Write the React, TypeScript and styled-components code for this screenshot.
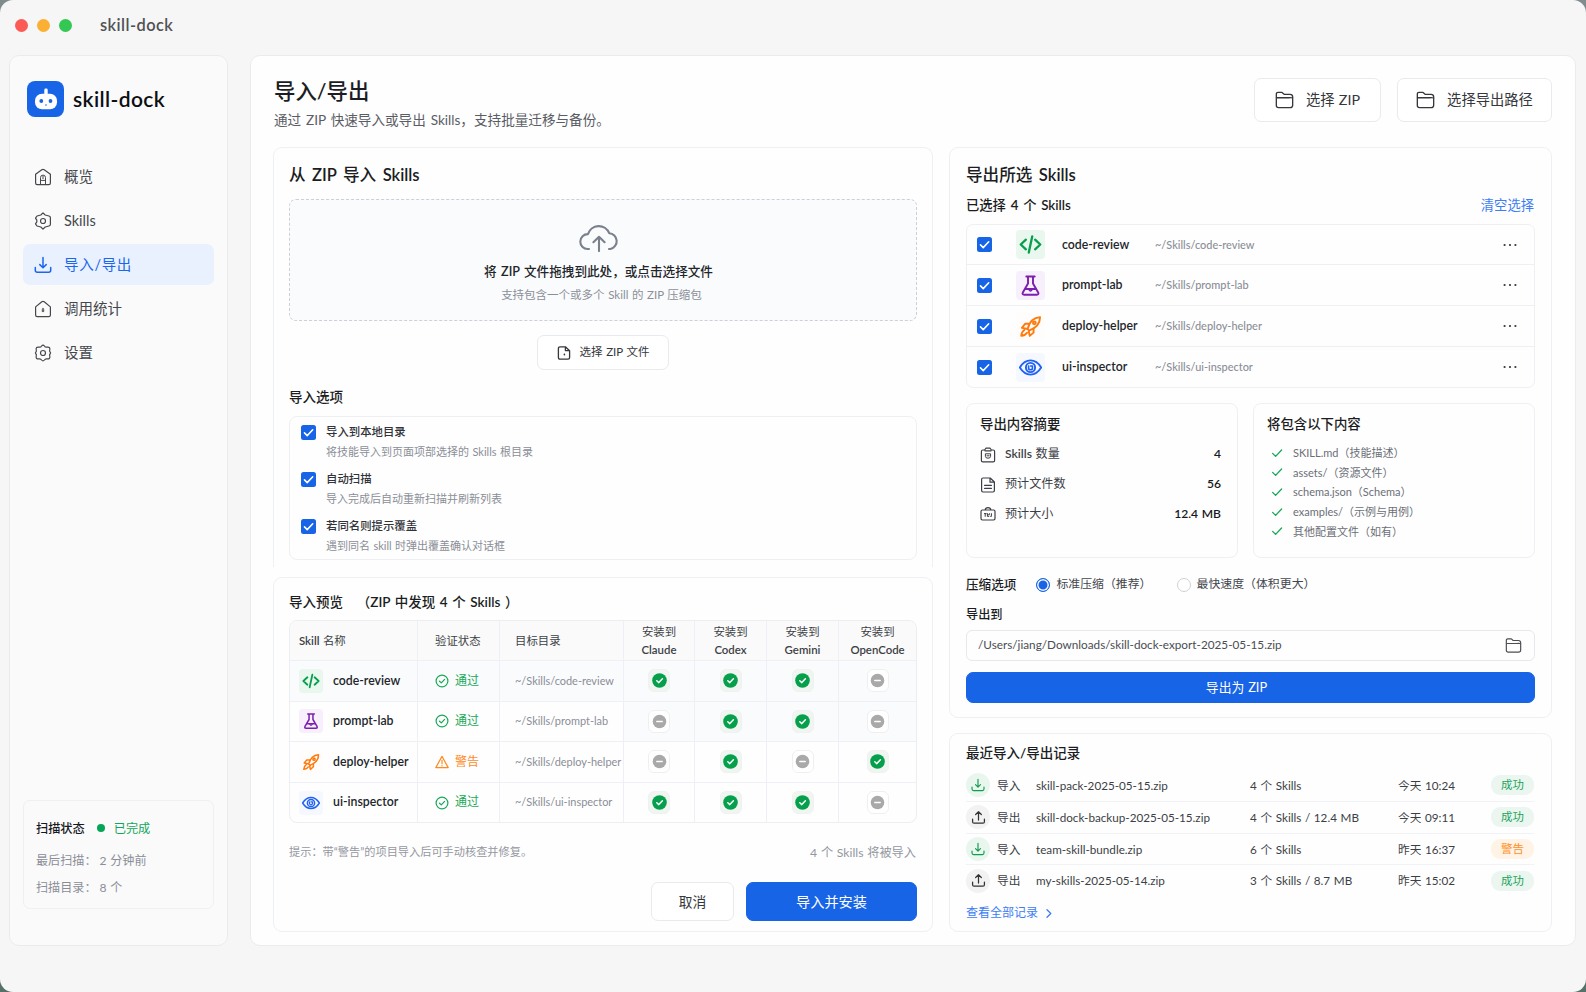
import React from 'react';
import styled, { createGlobalStyle } from 'styled-components';

const color = {
  blue: '#1864e6',
  link: '#3d7df2',
  green: '#06a04c',
  orange: '#ff8a1f',
  purple: '#7a1fb0',
  ink: '#1b1d22',
  text: '#3c3f45',
  sub: '#8b8e97',
  line: '#eef0f3',
};

const semibold = "'Lato Semibold', Lato, 'Noto Sans CJK SC', sans-serif";

const GlobalStyle = createGlobalStyle`
  * {
    box-sizing: border-box;
  }

  body {
    margin: 0;
    background: linear-gradient(#7f8b8d, #56706a);
    font-family: Lato, 'Noto Sans CJK SC', sans-serif;
    line-height: 1.4;
    word-spacing: 0.04em;
    color: ${color.ink};
  }

  h1, h2, h3, p, ul {
    margin: 0;
    padding: 0;
    font-weight: 500;
  }

  button {
    font-family: inherit;
    line-height: inherit;
    word-spacing: inherit;
  }

  svg {
    display: block;
    flex: none;
  }
`;

type SkillKey = 'code' | 'flask' | 'rocket' | 'eye';

type Skill = {
  name: string;
  icon: SkillKey;
  pass: boolean;
  targets: boolean[];
};

const skills: Skill[] = [
  { name: 'code-review', icon: 'code', pass: true, targets: [true, true, true, false] },
  { name: 'prompt-lab', icon: 'flask', pass: true, targets: [false, true, true, false] },
  { name: 'deploy-helper', icon: 'rocket', pass: false, targets: [false, true, false, true] },
  { name: 'ui-inspector', icon: 'eye', pass: true, targets: [true, true, true, false] },
];

const importOptions = [
  { title: '导入到本地目录', desc: '将技能导入到页面项部选择的 Skills 根目录' },
  { title: '自动扫描', desc: '导入完成后自动重新扫描并刷新列表' },
  { title: '若同名则提示覆盖', desc: '遇到同名 skill 时弹出覆盖确认对话框' },
];

const contents = [
  'SKILL.md（技能描述）',
  'assets/（资源文件）',
  'schema.json（Schema）',
  'examples/（示例与用例）',
  '其他配置文件（如有）',
];

const records = [
  { isImport: true, file: 'skill-pack-2025-05-15.zip', count: '4 个 Skills', date: '今天 10:24', ok: true },
  { isImport: false, file: 'skill-dock-backup-2025-05-15.zip', count: '4 个 Skills / 12.4 MB', date: '今天 09:11', ok: true },
  { isImport: true, file: 'team-skill-bundle.zip', count: '6 个 Skills', date: '昨天 16:37', ok: false },
  { isImport: false, file: 'my-skills-2025-05-14.zip', count: '3 个 Skills / 8.7 MB', date: '昨天 15:02', ok: true },
];

/* ---------- icons ---------- */

type IconProps = {
  w?: number;
  h?: number;
  box?: string;
  sw?: number;
  children: React.ReactNode;
};

const Icon: React.FC<IconProps> = ({ w = 18, h, box = '0 0 24 24', sw = 1.6, children }) => (
  <svg
    width={w}
    height={h ?? w}
    viewBox={box}
    fill="none"
    stroke="currentColor"
    strokeWidth={sw}
    strokeLinecap="round"
    strokeLinejoin="round"
  >
    {children}
  </svg>
);

const HomeIcon = () => (
  <Icon w={18} box="0 0 18 18" sw={1.2}>
    <path d="M1.6 6.2 7.8 1.8Q9 1 10.2 1.8L16.4 6.2V15Q16.4 16.6 14.8 16.6H3.2Q1.6 16.6 1.6 15Z" />
    <path d="M6.5 16.4V9.6A2.5 2.5 0 0 1 11.5 9.6V16.4M6.5 12.4H11.5M9 8.2V10.6" strokeWidth={1} />
  </Icon>
);

const StatsIcon = () => (
  <Icon w={18} box="0 0 18 18" sw={1.2}>
    <path d="M1.6 6.9 7.8 1.8Q9 .9 10.2 1.8L16.4 6.9V15Q16.4 16.6 14.8 16.6H3.2Q1.6 16.6 1.6 15Z" />
    <path d="M9 8.6Q9.9 9.3 9.7 10V11.6H8.3V10Q8.1 9.3 9 8.6Z" strokeWidth={1} />
  </Icon>
);

const GearIcon: React.FC<{ soft?: boolean }> = ({ soft }) => (
  <Icon w={18} box="0 0 18 18" sw={1.2}>
    {soft ? (
      <path d="M7.6 2Q9 .2 10.4 2Q11.2 3.4 12.8 3.2Q16.4 2.6 15.8 5.8Q15.2 7.4 16.2 8.2Q17 9 16.2 9.8Q15.2 10.6 15.8 12.2Q16.4 15.4 12.8 14.8Q11.2 14.6 10.4 16Q9 17.8 7.6 16Q6.8 14.6 5.2 14.8Q1.6 15.4 2.2 12.2Q2.8 10.6 1.8 9.8Q1 9 1.8 8.2Q2.8 7.4 2.2 5.8Q1.6 2.6 5.2 3.2Q6.8 3.4 7.6 2Z" />
    ) : (
      <path d="M9 .9 11.2 3 15 4Q16.4 4.4 16.4 5.8V12.2Q16.4 13.6 15 14L11.2 15 9 17.1 6.8 15 3 14 1.5 11.8 2.8 9.8V8.2L1.5 6.2 3 4 6.8 3Z" />
    )}
    <circle cx="9" cy="9" r="2.5" />
  </Icon>
);

const ImportIcon: React.FC<{ size?: number; sw?: number }> = ({ size = 18, sw = 1.5 }) => (
  <Icon w={size} box="0 0 18 18" sw={sw}>
    <path d="M9 1.6V11.6M5.8 8.6 9 11.8 12.2 8.6M1.3 11.6V14.2Q1.3 16.2 3.3 16.2H14.7Q16.7 16.2 16.7 14.2V11.6" />
  </Icon>
);

const ExportIcon: React.FC<{ size?: number }> = ({ size = 18 }) => (
  <Icon w={size} box="0 0 18 18" sw={1.5}>
    <path d="M9 12V2.2M5.6 5.4 9 2 12.4 5.4M1.9 10.8V14Q1.9 15.8 3.7 15.8H14.3Q16.1 15.8 16.1 14V10.8" />
  </Icon>
);

const FolderIcon: React.FC<{ w?: number; h?: number }> = ({ w = 19, h = 18 }) => (
  <Icon w={w} h={h} box="0 0 20 18" sw={1.4}>
    <path d="M1.4 14.8V2.8Q1.4 1 3.2 1H7.4L9.6 3H15.8Q18.6 3 18.6 5.8V14.4Q18.6 17 16 17H3.6Q1.4 17 1.4 14.8Z" />
    <path d="M1.6 6.6H14Q18 6.4 18.4 6.8" />
  </Icon>
);

const FileIcon = () => (
  <Icon w={14} box="0 0 14 14" sw={1.3}>
    <path d="M1.4 2.4Q1.4.8 3 .8H8.4L12.6 4.8V11.6Q12.6 13.2 11 13.2H3Q1.4 13.2 1.4 11.6ZM8.4.8V4.6H12.4" />
    <path d="M7.4 8.3V8.8" strokeWidth={1.6} />
  </Icon>
);

const CloudIcon = () => (
  <Icon w={40} h={31} box="0 0 40 31" sw={2.1}>
    <path d="M10 28H8.6A7.4 7.4 0 0 1 8.9 13.1A11.3 11.3 0 0 1 30.2 12.2A8 8 0 0 1 31.4 28H30" />
    <path d="M20 30V16M14.4 21.2 20 15.8 25.6 21.2" />
  </Icon>
);

const CheckMark: React.FC<{ w?: number; sw?: number }> = ({ w = 11, sw = 1.7 }) => (
  <Icon w={w} box="0 0 12 12" sw={sw}>
    <path d="M1.6 6.4 4.6 9.4 10.6 3" />
  </Icon>
);

const RobotIcon = () => (
  <svg width="24" height="24" viewBox="0 0 24 24" fill="#fff">
    <rect x="10.3" y="1.6" width="3.4" height="8" rx="1.4" />
    <rect x="1" y="6.8" width="22" height="15.4" rx="7" />
    <circle cx="7.3" cy="14" r="1.9" fill={color.blue} />
    <circle cx="16.5" cy="14" r="1.9" fill={color.blue} />
    <circle cx="12" cy="18" r=".8" fill={color.blue} />
  </svg>
);

const skillTint: Record<SkillKey, { fg: string; bg: string }> = {
  code: { fg: color.green, bg: '#e9f7ee' },
  flask: { fg: color.purple, bg: '#f7effc' },
  rocket: { fg: '#ff7a0c', bg: '#fffdfb' },
  eye: { fg: '#1f62f2', bg: '#f5f8ff' },
};

const skillShape: Record<SkillKey, React.ReactNode> = {
  code: <path d="M7.2 7 1.8 12 7.2 17M16.8 7 22.2 12 16.8 17M13.8 3.6 10.2 20.4" strokeWidth={2.4} />,
  flask: (
    <>
      <path d="M7.6 2.6H16.4M9.4 2.8V10L4 19.2Q3 21.6 5.4 21.6H18.6Q21 21.6 20 19.2L14.6 10V2.8M7.4 15.6H16.6" />
      <path d="M10.4 16.4Q12 19 13.6 16.4" strokeWidth={1.6} />
    </>
  ),
  rocket: (
    <>
      <path d="M9 14.6C10.6 8 14.6 2.6 22 2.2C22 9 17.4 13.8 10.6 16.4Z" />
      <path d="M10.2 9.2H6.4L3 13.4 8 14.4M15.2 14.4V18.4L11.2 21.8 10.2 17M5.6 15.6Q2.6 17.6 2.4 21.8Q6.6 21.4 8.4 18.6" />
      <circle cx="16" cy="8.2" r="1.5" />
    </>
  ),
  eye: (
    <>
      <path d="M.8 12Q5.4 4.6 12 4.6T23.2 12Q18.6 19.4 12 19.4T.8 12Z" />
      <circle cx="12" cy="12" r="4.8" />
      <path d="M10 10.4V12.4A2 2 0 0 0 14 12.4V10.4H12" strokeWidth={1.7} />
    </>
  ),
};

const SkillIcon: React.FC<{ kind: SkillKey; size: number }> = ({ kind, size }) => (
  <Icon w={size} sw={2}>
    {skillShape[kind]}
  </Icon>
);

const DotMark: React.FC<{ on: boolean }> = ({ on }) => (
  <svg width="15" height="15" viewBox="0 0 15 15" fill="none" stroke="#fff" strokeWidth="1.5" strokeLinecap="round">
    <circle cx="7.5" cy="7.5" r={on ? 7.3 : 6.8} fill={on ? color.green : '#a9a9a9'} stroke="none" />
    <path d={on ? 'M4.8 7.8 6.8 9.6 10.4 5.8' : 'M4.8 7.5H10.2'} strokeLinejoin="round" />
  </svg>
);

const PassIcon = () => (
  <Icon w={14} box="0 0 14 14" sw={1.2}>
    <circle cx="7" cy="7" r="5.9" />
    <path d="M4.5 7.2 6.3 8.9 9.6 5.4" />
  </Icon>
);

const WarnIcon = () => (
  <Icon w={14} box="0 0 14 14" sw={1.2}>
    <path d="M7 1.4 13.2 12.6H.8ZM7 5.4V8.8M7 10.6V10.8" />
  </Icon>
);

const BagIcon = () => (
  <Icon w={16} box="0 0 16 16" sw={1.2}>
    <path d="M1.4 4.4Q1.4 3 2.8 3H4.6L6 1.2H10L11.4 3H13.2Q14.6 3 14.6 4.4V13.4Q14.6 14.8 13.2 14.8H2.8Q1.4 14.8 1.4 13.4ZM5 3.8H11" />
    <path d="M5.4 7.2V9.4Q5.4 11.2 8 11.2T10.6 9.4V7.2ZM7 8.8H9.2" strokeWidth={1} />
  </Icon>
);

const DocIcon = () => (
  <Icon w={16} box="0 0 16 16" sw={1.2}>
    <path d="M1.6 2.4Q1.6 1 3 1H10.2L14.4 5V13.6Q14.4 15 13 15H3Q1.6 15 1.6 13.6ZM10 1.2V5.2H14M4.6 8.4H11.4M4.6 11.4H11.4" />
  </Icon>
);

const CaseIcon = () => (
  <Icon w={16} box="0 0 16 16" sw={1.2}>
    <path d="M1 5.4Q1 4 2.4 4H13.6Q15 4 15 5.4V12.6Q15 14 13.6 14H2.4Q1 14 1 12.6ZM5.2 3.8Q5.4 1.6 8 1.6T10.8 3.8" />
    <path d="M4.4 7.6H6.2M5.2 7.6V10.4M7.4 7.6V10.4H8.8M8 8.8H9.4V7.6M11.4 7.6V10.4H10.6" strokeWidth={1} />
  </Icon>
);

/* ---------- frame ---------- */

const Window = styled.div`
  width: 1586px;
  height: 992px;
  overflow: hidden;
  border-radius: 13px;
  background: #f6f6f6;
`;

const TitleBar = styled.header`
  display: flex;
  align-items: center;
  height: 55px;
  padding: 0 0 4px 15px;
`;

const Lights = styled.div`
  display: flex;
  gap: 9px;
  margin-right: 28px;
`;

const Light = styled.i<{ bg: string }>`
  width: 13px;
  height: 13px;
  border-radius: 50%;
  background: ${(props) => props.bg};
`;

const WindowTitle = styled.span`
  padding-bottom: 1px;
  color: #505154;
  font-family: ${semibold};
  font-size: 16.4px;
  font-weight: 600;
  letter-spacing: 0.45px;
  line-height: 20px;
`;

const Body = styled.div`
  display: flex;
  gap: 22px;
  height: 891px;
  padding: 0 10px 0 9px;
`;

const Sidebar = styled.aside`
  display: flex;
  flex: none;
  flex-direction: column;
  width: 219px;
  padding: 25px 13px 36px;
  border: 1px solid #e9ebee;
  border-radius: 10px;
  background: #fafafb;
`;

const Brand = styled.div`
  display: flex;
  align-items: center;
  gap: 9px;
  height: 36px;
  padding-left: 4px;
  color: #0d0f13;
  font-family: ${semibold};
  font-size: 21px;
  font-weight: 600;
  letter-spacing: 0.4px;
`;

const Logo = styled.span`
  display: flex;
  align-items: center;
  justify-content: center;
  width: 37px;
  height: 36px;
  border-radius: 8px;
  background: ${color.blue};
`;

const Nav = styled.nav`
  display: flex;
  flex-direction: column;
  gap: 3px;
  margin-top: 39px;
`;

const NavItem = styled.a<{ active?: boolean }>`
  display: flex;
  align-items: center;
  gap: 12px;
  height: 41px;
  padding: 1px 0 0 11px;
  border-radius: 7px;
  background: ${(props) => (props.active ? '#e9f1fe' : 'transparent')};
  color: ${(props) => (props.active ? '#1a66ee' : '#45474c')};
  font-size: 14.5px;
  letter-spacing: ${(props) => (props.active ? '0.7px' : 'normal')};
`;

const StatusCard = styled.section`
  margin-top: auto;
  height: 109px;
  padding: 15px 12px 0;
  border: 1px solid ${color.line};
  border-radius: 7px;
`;

const StatusHead = styled.div`
  display: flex;
  align-items: center;
  height: 25px;
  color: #17191d;
  font-size: 12.2px;
  font-weight: 500;
`;

const StatusDone = styled.span`
  display: flex;
  align-items: center;
  gap: 9px;
  margin-left: 12px;
  color: #12a75a;
  font-weight: 400;

  &::before {
    content: '';
    width: 8px;
    height: 8px;
    border-radius: 50%;
    background: #06a457;
  }
`;

const StatusLine = styled.p<{ gap?: number }>`
  display: flex;
  gap: 3px;
  margin-top: ${(props) => props.gap ?? 0}px;
  color: ${color.sub};
  font-size: 12.1px;
  font-weight: 400;
  line-height: 27px;
`;

const Main = styled.main`
  flex: 1;
  padding: 22px 23px 0 22px;
  border: 1px solid #e9ebee;
  border-radius: 10px;
  background: #fefefe;
`;

const PageHead = styled.div`
  display: flex;
  justify-content: space-between;
  height: 69px;
`;

const PageTitle = styled.h1`
  margin: 0 0 0 1px;
  font-size: 21.4px;
  line-height: 26px;
`;

const PageDesc = styled.p`
  margin: 4px 0 0 1px;
  color: #5a5d64;
  font-size: 13.6px;
  font-weight: 400;
  line-height: 24px;
  word-spacing: 0.1em;
`;

const HeadActions = styled.div`
  display: flex;
  gap: 16px;
`;

const Button = styled.button<{ w: number; h: number; size: number; primary?: boolean; gap?: number; shift?: number }>`
  display: flex;
  align-items: center;
  justify-content: center;
  gap: ${(props) => props.gap ?? 0}px;
  width: ${(props) => props.w}px;
  height: ${(props) => props.h}px;
  padding: 0 ${(props) => props.shift ?? 0}px 0 0;
  border: 1px solid ${(props) => (props.primary ? color.blue : '#e8eaee')};
  border-radius: 7px;
  background: ${(props) => (props.primary ? color.blue : '#fff')};
  color: ${(props) => (props.primary ? '#fff' : '#35373c')};
  font-size: ${(props) => props.size}px;
`;

const Columns = styled.div`
  display: flex;
  gap: 16px;
`;

const Column = styled.div<{ w: number }>`
  display: flex;
  flex: none;
  flex-direction: column;
  width: ${(props) => props.w}px;
`;

const Card = styled.section<{ h: number; mt?: number; px?: number; open?: boolean }>`
  height: ${(props) => props.h}px;
  margin-top: ${(props) => props.mt ?? 0}px;
  padding: 0 ${(props) => props.px ?? 15}px;
  border: 1px solid ${color.line};
  border-radius: 9px;
  ${(props) => props.open && 'border-bottom: 0; border-radius: 9px 9px 0 0;'}
`;

const CardTitle = styled.h2<{ size: number; h: number; mt: number }>`
  margin-top: ${(props) => props.mt}px;
  font-family: ${semibold};
  font-size: ${(props) => props.size}px;
  line-height: ${(props) => props.h}px;
  white-space: pre;
  word-spacing: 0.09em;
`;

const MainTitle = styled(CardTitle)`
  padding-top: 1px;
  margin-bottom: -1px;
  word-spacing: 0.14em;
`;

/* ---------- import ---------- */

const DropZone = styled.div`
  display: flex;
  flex-direction: column;
  align-items: center;
  height: 122px;
  margin-top: 12px;
  padding: 21px 9px 0 0;
  border: 1px dashed #cdd0d6;
  border-radius: 7px;
  background: #fafbfd;
  color: #7a808c;
`;

const DropTitle = styled.p`
  margin-top: 8px;
  color: #22252a;
  font-family: ${semibold};
  font-size: 12.6px;
  line-height: 24px;
  word-spacing: 0.1em;
`;

const DropHint = styled.p`
  margin-left: 6px;
  color: #8b8f98;
  font-size: 11.5px;
  font-weight: 400;
  line-height: 22px;
`;

const PickRow = styled.div`
  display: flex;
  justify-content: center;
  margin-top: 14px;
`;

const OptionBox = styled.div`
  height: 144px;
  margin-top: 7px;
  padding: 5px 11px;
  border: 1px solid ${color.line};
  border-radius: 8px;
`;

const Option = styled.label`
  display: flex;
  gap: 10px;
  height: 46.8px;
`;

const Checkbox = styled.span`
  display: flex;
  align-items: center;
  justify-content: center;
  flex: none;
  width: 15px;
  height: 15px;
  border-radius: 2.5px;
  background: ${color.blue};
  color: #fff;
`;

const OptionCheck = styled(Checkbox)`
  margin-top: 3px;
`;

const OptionText = styled.span`
  color: #303338;
  font-size: 11.4px;
  font-weight: 500;
  line-height: 20px;
`;

const OptionDesc = styled.small`
  display: block;
  color: ${color.sub};
  font-size: 11px;
  font-weight: 400;
`;

const Table = styled.div`
  margin-top: 6px;
  overflow: hidden;
  border: 1px solid #eceef2;
  border-radius: 8px;
`;

const TableRow = styled.div<{ head?: boolean; tint?: boolean }>`
  display: grid;
  grid-template-columns: 127px 82px 124px 71px 72px 72px 1fr;
  height: ${(props) => (props.head ? 39 : 40.6)}px;
  background: ${(props) => (props.head ? '#fafafa' : props.tint ? '#fafbfd' : 'transparent')};
  color: ${color.text};
  font-size: 11.4px;

  & + & {
    border-top: 1px solid #eef0f5;
  }
`;

const Cell = styled.div<{ pl?: number; gap?: number; center?: boolean; tint?: boolean }>`
  display: flex;
  align-items: center;
  justify-content: ${(props) => (props.center ? 'center' : 'flex-start')};
  gap: ${(props) => props.gap ?? 0}px;
  padding-left: ${(props) => props.pl ?? 0}px;
  background: ${(props) => (props.tint ? '#fafbfd' : 'transparent')};
  text-align: center;
  line-height: 18.5px;
  white-space: nowrap;

  & + & {
    border-left: 1px solid #eef0f5;
  }
`;

const HeadCell = styled(Cell)`
  padding-top: 1px;
  font-family: ${semibold};
`;

const SkillTile = styled.span<{ kind: SkillKey; size: number }>`
  display: flex;
  align-items: center;
  justify-content: center;
  width: ${(props) => props.size}px;
  height: ${(props) => props.size}px;
  border-radius: 4px;
  background: ${(props) => skillTint[props.kind].bg};
  color: ${(props) => skillTint[props.kind].fg};
`;

const SkillName = styled.span`
  color: #22252a;
  font-family: ${semibold};
  font-size: 12.3px;
  font-weight: 600;
`;

const SkillPath = styled.span`
  color: ${color.sub};
  font-size: 10.95px;
`;

const Verdict = styled.span<{ pass: boolean }>`
  display: flex;
  align-items: center;
  gap: 6px;
  color: ${(props) => (props.pass ? '#18a957' : color.orange)};
  font-size: 12px;
`;

const MarkTile = styled.span<{ on: boolean }>`
  display: flex;
  align-items: center;
  justify-content: center;
  width: 22px;
  height: 23px;
  border: 1px solid ${(props) => (props.on ? '#eef3ef' : '#eeeff1')};
  border-radius: 6px;
  background: ${(props) => (props.on ? '#f1f5f2' : '#fff')};
`;

const Notes = styled.div`
  display: flex;
  justify-content: space-between;
  margin-top: 18px;
  padding-right: 1px;
  color: #94979f;
  font-size: 11.2px;
  line-height: 22px;
`;

const Footer = styled.div`
  display: flex;
  justify-content: flex-end;
  gap: 12px;
  margin-top: 17px;
`;

const Summary = styled.span`
  font-size: 12.2px;
  line-height: 24px;
`;

/* ---------- export ---------- */

const Between = styled.div`
  display: flex;
  justify-content: space-between;
  margin-top: 6px;
  padding-right: 1px;
  font-family: ${semibold};
  font-size: 13.3px;
  font-weight: 500;
  line-height: 24px;
  word-spacing: 0.11em;
`;

const TextLink = styled.a`
  display: flex;
  align-items: center;
  color: ${color.link};
  font-weight: 400;
`;

const PickList = styled.ul`
  height: 164px;
  margin: 7px 0 0;
  border: 1px solid ${color.line};
  border-radius: 7px;
  list-style: none;
`;

const PickItem = styled.li`
  display: grid;
  grid-template-columns: 39px 46px 93px 1fr 16px;
  align-items: center;
  height: 39px;
  padding: 0 16px 0 10px;
  color: #33363b;

  & + & {
    height: 41px;
    border-top: 1px solid ${color.line};
  }
`;

const Panels = styled.div`
  display: grid;
  grid-template-columns: 272px 282px;
  gap: 15px;
  margin-top: 15px;
`;

const Panel = styled.div`
  height: 154.5px;
  padding: 7px 16px 0 14px;
  border: 1px solid ${color.line};
  border-radius: 8px;
`;

const PanelTitle = styled.h3`
  margin-left: -1px;
  font-size: 13.4px;
  line-height: 26px;
`;

const StatRow = styled.div`
  display: flex;
  align-items: center;
  gap: 9px;
  height: 29.7px;
  color: ${color.text};
  font-family: ${semibold};
  font-size: 12.1px;

  b {
    margin-left: auto;
    color: #17191d;
    font-weight: 600;
  }
`;

const StatRows = styled.div`
  margin-top: 3px;
  margin-left: -1px;
`;

const ContentRow = styled.div`
  display: flex;
  align-items: center;
  gap: 10px;
  height: 19.65px;
  padding-left: 3px;
  color: #6b6e76;
  font-size: 11px;

  svg {
    color: #16a857;
  }
`;

const ContentRows = styled.div`
  margin-top: 6px;
`;

const Compression = styled.div`
  display: flex;
  align-items: center;
  height: 24px;
  margin-top: 15px;
  font-size: 12.6px;
  font-weight: 500;
`;

const Radio = styled.label<{ on?: boolean; ml: number }>`
  display: flex;
  align-items: center;
  gap: 6px;
  margin-left: ${(props) => props.ml}px;
  color: #44474d;
  font-size: 11.9px;
  font-weight: 400;

  &::before {
    content: '';
    width: 12px;
    height: 12px;
    border: 1px solid ${(props) => (props.on ? color.blue : '#cfd1d6')};
    border-radius: 50%;
    background: ${(props) => (props.on ? color.blue : '#fff')};
    box-shadow: inset 0 0 0 1.5px #fff;
  }
`;

const FieldLabel = styled.p`
  margin-top: 6px;
  font-size: 12.2px;
  line-height: 24px;
`;

const PathField = styled.div`
  display: flex;
  align-items: center;
  justify-content: space-between;
  height: 31px;
  margin: 3.5px 0 11px;
  padding: 0 12px 0 11px;
  border: 1px solid #e6e8ec;
  border-radius: 6px;
  color: #4a4d53;
  font-size: 11.75px;
`;

const RecordRows = styled.div`
  margin-top: 4px;
  padding-right: 1px;
`;

const RecordRow = styled.div`
  display: grid;
  grid-template-columns: 31px 39px 214px 148px 1fr 43px;
  align-items: center;
  height: 31.75px;
  color: ${color.text};
  font-size: 11.7px;

  & + & {
    border-top: 1px solid #f0f2f5;
  }
`;

const RecordIcon = styled.span<{ green: boolean }>`
  display: flex;
  align-items: center;
  justify-content: center;
  width: 24px;
  height: 24px;
  border-radius: 50%;
  background: ${(props) => (props.green ? '#e9f6ee' : '#f2f2f3')};
  color: ${(props) => (props.green ? '#169a52' : '#303236')};
`;

const Badge = styled.span<{ ok: boolean }>`
  height: 20px;
  border-radius: 9px;
  background: ${(props) => (props.ok ? '#eaf6ef' : '#fff3e5')};
  color: ${(props) => (props.ok ? '#1ba35b' : '#ff8f27')};
  font-size: 11.4px;
  line-height: 20px;
  text-align: center;
`;

const MoreLink = styled(TextLink)`
  gap: 8px;
  margin-top: 5px;
  font-size: 12px;
  line-height: 24px;
`;

const ImportCard: React.FC = () => (
  <Card h={420} open>
    <MainTitle size={16.6} h={26} mt={13}>从 ZIP 导入 Skills</MainTitle>
    <DropZone>
      <CloudIcon />
      <DropTitle>将 ZIP 文件拖拽到此处，或点击选择文件</DropTitle>
      <DropHint>支持包含一个或多个 Skill 的 ZIP 压缩包</DropHint>
    </DropZone>
    <PickRow>
      <Button w={132} h={35} size={11.5} gap={9}>
        <FileIcon />
        选择 ZIP 文件
      </Button>
    </PickRow>
    <CardTitle size={13.5} h={24} mt={15}>导入选项</CardTitle>
    <OptionBox>
      {importOptions.map((option) => (
        <Option key={option.title}>
          <OptionCheck>
            <CheckMark />
          </OptionCheck>
          <OptionText>
            {option.title}
            <OptionDesc>{option.desc}</OptionDesc>
          </OptionText>
        </Option>
      ))}
    </OptionBox>
  </Card>
);

const PreviewCard: React.FC = () => (
  <Card h={355} mt={10}>
    <CardTitle size={13.5} h={24} mt={12}>导入预览   （ZIP 中发现 4 个 Skills ）</CardTitle>
    <Table>
      <TableRow head>
        <HeadCell pl={9}>Skill 名称</HeadCell>
        <HeadCell pl={17}>验证状态</HeadCell>
        <HeadCell pl={15}>目标目录</HeadCell>
        {['Claude', 'Codex', 'Gemini', 'OpenCode'].map((target) => (
          <HeadCell key={target} center>
            安装到
            <br />
            {target}
          </HeadCell>
        ))}
      </TableRow>
      {skills.map((skill, i) => (
        <TableRow key={skill.name} tint={i === 0}>
          <Cell pl={9} gap={10}>
            <SkillTile kind={skill.icon} size={24}>
              <SkillIcon kind={skill.icon} size={18} />
            </SkillTile>
            <SkillName>{skill.name}</SkillName>
          </Cell>
          <Cell pl={17}>
            <Verdict pass={skill.pass}>
              {skill.pass ? <PassIcon /> : <WarnIcon />}
              {skill.pass ? '通过' : '警告'}
            </Verdict>
          </Cell>
          <Cell pl={15}>
            <SkillPath>~/Skills/{skill.name}</SkillPath>
          </Cell>
          {skill.targets.map((on, n) => (
            <Cell key={n} center tint={i === 1}>
              <MarkTile on={on}>
                <DotMark on={on} />
              </MarkTile>
            </Cell>
          ))}
        </TableRow>
      ))}
    </Table>
    <Notes>
      提示：带“警告”的项目导入后可手动核查并修复。
      <Summary>4 个 Skills 将被导入</Summary>
    </Notes>
    <Footer>
      <Button w={83} h={39} size={13.8}>取消</Button>
      <Button w={171} h={39} size={14.2} primary>导入并安装</Button>
    </Footer>
  </Card>
);

const ExportCard: React.FC = () => (
  <Card h={571} px={16}>
    <MainTitle size={16.6} h={26} mt={13}>导出所选 Skills</MainTitle>
    <Between>
      已选择 4 个 Skills
      <TextLink>清空选择</TextLink>
    </Between>
    <PickList>
      {skills.map((skill) => (
        <PickItem key={skill.name}>
          <Checkbox>
            <CheckMark />
          </Checkbox>
          <SkillTile kind={skill.icon} size={29}>
            <SkillIcon kind={skill.icon} size={23} />
          </SkillTile>
          <SkillName>{skill.name}</SkillName>
          <SkillPath>~/Skills/{skill.name}</SkillPath>
          <svg width="16" height="4" viewBox="0 0 16 4" fill="currentColor">
            <circle cx="2.6" cy="2" r="1.1" />
            <circle cx="8" cy="2" r="1.1" />
            <circle cx="13.4" cy="2" r="1.1" />
          </svg>
        </PickItem>
      ))}
    </PickList>
    <Panels>
      <Panel>
        <PanelTitle>导出内容摘要</PanelTitle>
        <StatRows>
          <StatRow>
            <BagIcon />
            Skills 数量<b>4</b>
          </StatRow>
          <StatRow>
            <DocIcon />
            预计文件数<b>56</b>
          </StatRow>
          <StatRow>
            <CaseIcon />
            预计大小<b>12.4 MB</b>
          </StatRow>
        </StatRows>
      </Panel>
      <Panel>
        <PanelTitle>将包含以下内容</PanelTitle>
        <ContentRows>
          {contents.map((content) => (
            <ContentRow key={content}>
              <CheckMark w={12} sw={1.3} />
              {content}
            </ContentRow>
          ))}
        </ContentRows>
      </Panel>
    </Panels>
    <Compression>
      压缩选项
      <Radio on ml={20}>标准压缩（推荐）</Radio>
      <Radio ml={25}>最快速度（体积更大）</Radio>
    </Compression>
    <FieldLabel>导出到</FieldLabel>
    <PathField>
      /Users/jiang/Downloads/skill-dock-export-2025-05-15.zip
      <FolderIcon w={17} h={15} />
    </PathField>
    <Button w={569} h={31} size={12.8} shift={28} primary>导出为 ZIP</Button>
  </Card>
);

const RecordCard: React.FC = () => (
  <Card h={199} mt={15} px={16}>
    <CardTitle size={13.5} h={24} mt={7}>最近导入/导出记录</CardTitle>
    <RecordRows>
      {records.map((record) => (
        <RecordRow key={record.file}>
          <RecordIcon green={record.isImport}>
            {record.isImport ? <ImportIcon size={14} /> : <ExportIcon size={15} />}
          </RecordIcon>
          <span>{record.isImport ? '导入' : '导出'}</span>
          <span>{record.file}</span>
          <span>{record.count}</span>
          <span>{record.date}</span>
          <Badge ok={record.ok}>{record.ok ? '成功' : '警告'}</Badge>
        </RecordRow>
      ))}
    </RecordRows>
    <MoreLink>
      查看全部记录
      <Icon w={6} h={9} box="0 0 6 9" sw={1.3}>
        <path d="M1 .8 4.8 4.5 1 8.2" />
      </Icon>
    </MoreLink>
  </Card>
);

const App: React.FC = () => (
  <>
    <GlobalStyle />
    <Window>
      <TitleBar>
        <Lights>
          <Light bg="#fb5a55" />
          <Light bg="#fbb034" />
          <Light bg="#33c754" />
        </Lights>
        <WindowTitle>skill-dock</WindowTitle>
      </TitleBar>
      <Body>
        <Sidebar>
          <Brand>
            <Logo>
              <RobotIcon />
            </Logo>
            skill-dock
          </Brand>
          <Nav>
            <NavItem>
              <HomeIcon />
              概览
            </NavItem>
            <NavItem>
              <GearIcon />
              Skills
            </NavItem>
            <NavItem active>
              <ImportIcon />
              导入/导出
            </NavItem>
            <NavItem>
              <StatsIcon />
              调用统计
            </NavItem>
            <NavItem>
              <GearIcon soft />
              设置
            </NavItem>
          </Nav>
          <StatusCard>
            <StatusHead>
              扫描状态
              <StatusDone>已完成</StatusDone>
            </StatusHead>
            <StatusLine gap={6}>
              <span>最后扫描：</span>2 分钟前
            </StatusLine>
            <StatusLine>
              <span>扫描目录：</span>8 个
            </StatusLine>
          </StatusCard>
        </Sidebar>
        <Main>
          <PageHead>
            <div>
              <PageTitle>导入/导出</PageTitle>
              <PageDesc>通过 ZIP 快速导入或导出 Skills，支持批量迁移与备份。</PageDesc>
            </div>
            <HeadActions>
              <Button w={127} h={44} size={14.3} gap={12}>
                <FolderIcon />
                选择 ZIP
              </Button>
              <Button w={155} h={44} size={14.3} gap={12}>
                <FolderIcon />
                选择导出路径
              </Button>
            </HeadActions>
          </PageHead>
          <Columns>
            <Column w={660}>
              <ImportCard />
              <PreviewCard />
            </Column>
            <Column w={603}>
              <ExportCard />
              <RecordCard />
            </Column>
          </Columns>
        </Main>
      </Body>
    </Window>
  </>
);

export default App;
